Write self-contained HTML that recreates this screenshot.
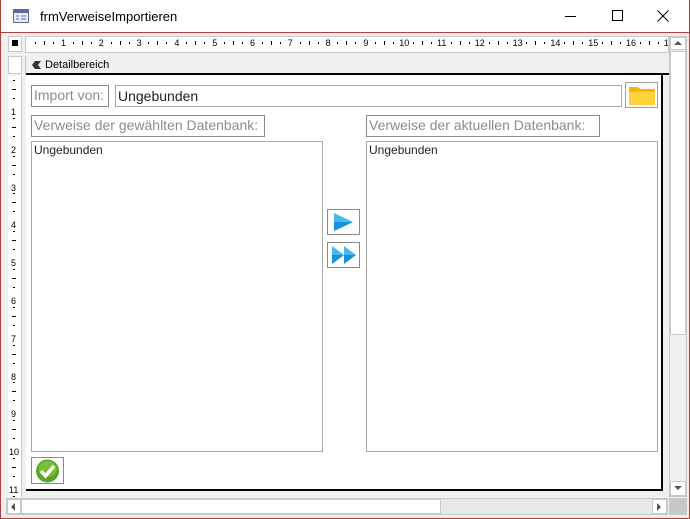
<!DOCTYPE html>
<html><head><style>
*{margin:0;padding:0;box-sizing:border-box}
body{width:690px;height:519px;position:relative;background:#fff;font-family:"Liberation Sans","DejaVu Sans",sans-serif;overflow:hidden}
.a{position:absolute}
.lbl{position:absolute;border:1px solid #8a8a8a;color:#8c8c8c;font-size:14px;padding:1px 2px;white-space:nowrap;line-height:17px}
.box{position:absolute;border:1px solid #a8a8a8;background:#fff}
</style></head><body>
<div class="a" style="left:0;top:0;width:690px;height:519px;border:1px solid #b04040;border-top:none"></div>
<div class="a" style="left:1px;top:32px;width:688px;height:1px;background:#b04040"></div>
<svg class="a" style="left:13px;top:9px" width="16" height="14"><rect x="0.5" y="0.5" width="15" height="13" fill="#e8eef8" stroke="#5a6a9a"/><rect x="1" y="1" width="14" height="3" fill="#5a6a9a"/><path d="M3 7h3M3 10h3M8 7h5M8 10h5" stroke="#5a6a9a"/></svg>
<div class="a" style="left:40px;top:9px;font-size:13px;color:#000">frmVerweiseImportieren</div>
<div class="a" style="left:565px;top:16px;width:11px;height:1px;background:#000"></div>
<div class="a" style="left:612px;top:10px;width:11px;height:11px;border:1px solid #000"></div>
<svg class="a" style="left:657px;top:10px" width="12" height="12"><path d="M0.5 0.5L11.5 11.5M11.5 0.5L0.5 11.5" stroke="#000"/></svg>
<div class="a" style="left:1px;top:33px;width:688px;height:485px;background:#f0f0f0"></div>
<div class="a" style="left:8px;top:36px;width:14px;height:16px;background:#fff;border:1px solid #c8c8c8"></div>
<div class="a" style="left:12px;top:40px;width:6px;height:6px;background:#000"></div>
<div class="a" style="left:25px;top:36px;width:644px;height:17px;background:#fff;border:1px solid #c8c8c8"></div>
<div id="rul" class="a" style="left:26px;top:38px;width:642px;height:14px;overflow:hidden;font-size:9px;line-height:11px"></div>
<div class="a" style="left:669px;top:36px;width:18px;height:461px;background:#f0f0f0;border:1px solid #c8c8c8"></div>
<div class="a" style="left:670px;top:37px;width:16px;height:13px;background:#fff;border:1px solid #c8c8c8"></div>
<svg class="a" style="left:674px;top:41px" width="8" height="5"><path d="M0 4L4 0L8 4Z" fill="#555"/></svg>
<div class="a" style="left:670px;top:51px;width:16px;height:284px;background:#fff;border:1px solid #c8c8c8"></div>
<div class="a" style="left:670px;top:481px;width:16px;height:15px;background:#fff;border:1px solid #c8c8c8"></div>
<svg class="a" style="left:674px;top:486px" width="8" height="5"><path d="M0 0L4 4L8 0Z" fill="#555"/></svg>
<div class="a" style="left:6px;top:498px;width:662px;height:17px;background:#e8e8e8;border:1px solid #c8c8c8"></div>
<div class="a" style="left:7px;top:499px;width:14px;height:15px;background:#fff;border:1px solid #c8c8c8"></div>
<svg class="a" style="left:11px;top:503px" width="5" height="8"><path d="M4 0L0 4L4 8Z" fill="#555"/></svg>
<div class="a" style="left:21px;top:499px;width:420px;height:15px;background:#fff;border:1px solid #c8c8c8"></div>
<div class="a" style="left:652px;top:499px;width:15px;height:15px;background:#fff;border:1px solid #c8c8c8"></div>
<svg class="a" style="left:657px;top:503px" width="5" height="8"><path d="M0 0L4 4L0 8Z" fill="#555"/></svg>
<div class="a" style="left:669px;top:498px;width:18px;height:17px;background:#c8c8c8"></div>
<div class="a" style="left:8px;top:56px;width:14px;height:18px;background:#fff;border:1px solid #c8c8c8"></div>
<div class="a" style="left:8px;top:76px;width:14px;height:421px;background:#fff;border-right:1px solid #c8c8c8"></div>
<div id="vr" class="a" style="left:8px;top:76px;width:14px;height:421px;overflow:hidden;font-size:9px"></div>
<div class="a" style="left:25px;top:56px;width:644px;height:18px;background:#f0f0f0;border-left:1px solid #c8c8c8"></div>
<svg class="a" style="left:32px;top:60px" width="10" height="10"><path d="M9 1L3 1L0 5L3 9L9 9L6 5Z" fill="#333"/></svg>
<div class="a" style="left:45px;top:59px;font-size:11px;color:#000">Detailbereich</div>
<div class="a" style="left:26px;top:73px;width:643px;height:2px;background:#000"></div>
<div class="a" style="left:26px;top:75px;width:636px;height:415px;background:#fff"></div>
<div class="a" style="left:661px;top:75px;width:2px;height:416px;background:#000"></div>
<div class="a" style="left:26px;top:489px;width:637px;height:2px;background:#000"></div>
<div class="a" style="left:663px;top:75px;width:6px;height:416px;background:#f0f0f0"></div>

<div class="lbl" style="left:31px;top:85px;width:78px;height:22px">Import von:</div>
<div class="box" style="left:115px;top:85px;width:507px;height:22px;font-size:14px;color:#222;padding:1px 2px;line-height:18px">Ungebunden</div>
<div class="a" style="left:625px;top:82px;width:33px;height:26px;border:1px solid #a0a0a0;background:#fafafa"></div>
<svg class="a" style="left:629px;top:86px" width="26" height="19"><path d="M0 1h9l2 2h15v16H0Z" fill="#f5b800"/><rect x="0" y="5" width="26" height="14" fill="#ffd13a"/><path d="M0 5h26" stroke="#f0b000"/></svg>

<div class="lbl" style="left:31px;top:115px;width:234px;height:22px">Verweise der gewählten Datenbank:</div>
<div class="lbl" style="left:366px;top:115px;width:234px;height:22px">Verweise der aktuellen Datenbank:</div>

<div class="box" style="left:31px;top:141px;width:292px;height:311px;font-size:12px;color:#222;padding:1px 2px">Ungebunden</div>
<div class="box" style="left:366px;top:141px;width:292px;height:311px;font-size:12px;color:#222;padding:1px 2px">Ungebunden</div>

<div class="a" style="left:327px;top:209px;width:33px;height:26px;border:1px solid #8a8a8a;background:#fff"></div>
<svg class="a" style="left:333px;top:212px" width="22" height="20"><path d="M1 1L20 10L1 19Z" fill="#49b8ef"/><path d="M1 10L20 10L1 19Z" fill="#1a90d8"/></svg>
<div class="a" style="left:327px;top:242px;width:33px;height:26px;border:1px solid #8a8a8a;background:#fff"></div>
<svg class="a" style="left:331px;top:245px" width="26" height="20"><path d="M1 1L13 10L1 19Z" fill="#49b8ef"/><path d="M1 10L13 10L1 19Z" fill="#1a90d8"/><path d="M13 1L25 10L13 19Z" fill="#49b8ef"/><path d="M13 10L25 10L13 19Z" fill="#1a90d8"/></svg>

<div class="a" style="left:31px;top:457px;width:33px;height:27px;border:1px solid #8a8a8a;background:#fff"></div>
<svg class="a" style="left:35px;top:459px" width="25" height="24"><ellipse cx="12.5" cy="12" rx="11.5" ry="11.5" fill="#5aa622"/><ellipse cx="12.5" cy="10" rx="9" ry="8" fill="#78c03a"/><path d="M6 12L10.5 17L19 7" stroke="#fff" stroke-width="3.5" fill="none"/></svg>

<script>
var r=document.getElementById('rul'),h='';
for(var i=0;i<17;i++){var x=i*37.8;
h+='<span style="position:absolute;left:'+(x+9)+'px;top:4px;width:1px;height:2px;background:#000"></span>';
h+='<span style="position:absolute;left:'+(x+18)+'px;top:3px;width:1px;height:4px;background:#000"></span>';
h+='<span style="position:absolute;left:'+(x+27)+'px;top:4px;width:1px;height:2px;background:#000"></span>';
h+='<span style="position:absolute;left:'+(x+(i+1>9?33:35))+'px;top:0">'+(i+1)+'</span>';}
r.innerHTML=h;
var v=document.getElementById('vr');h='';
for(var i=0;i<12;i++){var y=i*37.8;
h+='<span style="position:absolute;top:'+(y+4)+'px;left:5px;width:2px;height:1px;background:#000"></span>';
h+='<span style="position:absolute;top:'+(y+13)+'px;left:4px;width:4px;height:1px;background:#000"></span>';
h+='<span style="position:absolute;top:'+(y+22)+'px;left:5px;width:2px;height:1px;background:#000"></span>';
if(i<11)h+='<span style="position:absolute;top:'+(y+31)+'px;left:'+(i+1>9?1:3)+'px;line-height:10px">'+(i+1)+'</span>';}
v.innerHTML=h;
</script>
</body></html>
